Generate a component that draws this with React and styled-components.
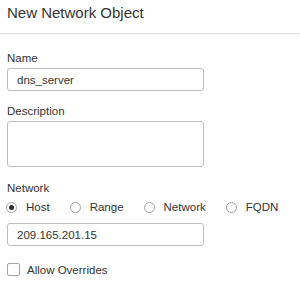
import React from 'react';
import styled, { createGlobalStyle } from 'styled-components';

const GlobalStyle = createGlobalStyle`
    html, body {
        margin: 0;
        padding: 0;
        background: #ffffff;
        overflow: hidden;
    }

    body {
        font-family: "Liberation Sans", Arial, sans-serif;
        color: #333333;
    }
`;

const PANEL = styled.div`
    width: 300px;
    height: 281px;
    background: #ffffff;
`;

const HEADER = styled.div`
    height: 34px;
    box-sizing: border-box;
    padding: 3px 7px 0;
    border-bottom: 1px solid #e4e4e4;
    box-shadow: 0 1px 2px rgba(0, 0, 0, 0.06);

    h2 {
        margin: 0;
        font-size: 15px;
        line-height: 20px;
        font-weight: normal;
        color: #333333;
    }
`;

const FORM = styled.div`
    display: flex;
    flex-direction: column;
    padding: 17px 7px 0;
`;

const FIELD = styled.div`
    display: flex;
    flex-direction: column;
    margin-top: ${props => props.$gap || 0}px;
`;

const LABEL = styled.label`
    font-size: 11.5px;
    line-height: 14px;
    color: #333333;
    margin-bottom: 3px;
`;

const INPUT = styled.input`
    width: 197px;
    height: 23px;
    box-sizing: border-box;
    margin: ${props => props.$top || 0}px 0 0;
    padding: 0 9px;
    border: 1px solid #bdbdbd;
    border-radius: 3px;
    font-family: inherit;
    font-size: 11.5px;
    color: #333333;
    background: #ffffff;
    outline: none;
`;

const TEXTAREA = styled.textarea`
    width: 197px;
    height: 46px;
    box-sizing: border-box;
    margin: 0;
    padding: 4px 9px;
    border: 1px solid #bdbdbd;
    border-radius: 3px;
    font-family: inherit;
    font-size: 11.5px;
    resize: none;
    outline: none;
`;

const RADIOS = styled.div`
    display: flex;
    align-items: center;
    gap: 20px;
    height: 12px;
    margin: 3px 0 0 -1px;
`;

const OPTION = styled.div`
    display: flex;
    align-items: center;
    gap: 9px;
    font-size: 11.5px;
    line-height: 12px;
    color: #333333;
`;

const RADIO = styled.span`
    width: 11px;
    height: 11px;
    box-sizing: border-box;
    border: 1px solid #a3a3a3;
    border-radius: 50%;
    display: flex;
    align-items: center;
    justify-content: center;
    background: #ffffff;

    &::after {
        content: '';
        width: 5px;
        height: 5px;
        border-radius: 50%;
        background: ${props => (props.$checked ? '#2b2b2b' : 'transparent')};
    }
`;

const CHECKROW = styled.div`
    display: flex;
    align-items: center;
    gap: 7px;
    margin-top: 17px;
    font-size: 11.5px;
    color: #333333;
`;

const CHECKBOX = styled.span`
    width: 13px;
    height: 13px;
    box-sizing: border-box;
    border: 1px solid #a3a3a3;
    border-radius: 2px;
    background: #ffffff;
`;

const options = ['Host', 'Range', 'Network', 'FQDN'];

const App = () => {
    return (
        <PANEL>
            <GlobalStyle />
            <HEADER>
                <h2>New Network Object</h2>
            </HEADER>
            <FORM>
                <FIELD>
                    <LABEL>Name</LABEL>
                    <INPUT defaultValue="dns_server" />
                </FIELD>
                <FIELD $gap={13}>
                    <LABEL>Description</LABEL>
                    <TEXTAREA />
                </FIELD>
                <FIELD $gap={14}>
                    <LABEL>Network</LABEL>
                    <RADIOS>
                        {options.map(o => (
                            <OPTION key={o}>
                                <RADIO $checked={o === 'Host'} />
                                {o}
                            </OPTION>
                        ))}
                    </RADIOS>
                    <INPUT $top={10} defaultValue="209.165.201.15" />
                </FIELD>
                <CHECKROW>
                    <CHECKBOX />
                    Allow Overrides
                </CHECKROW>
            </FORM>
        </PANEL>
    );
};

export default App;
